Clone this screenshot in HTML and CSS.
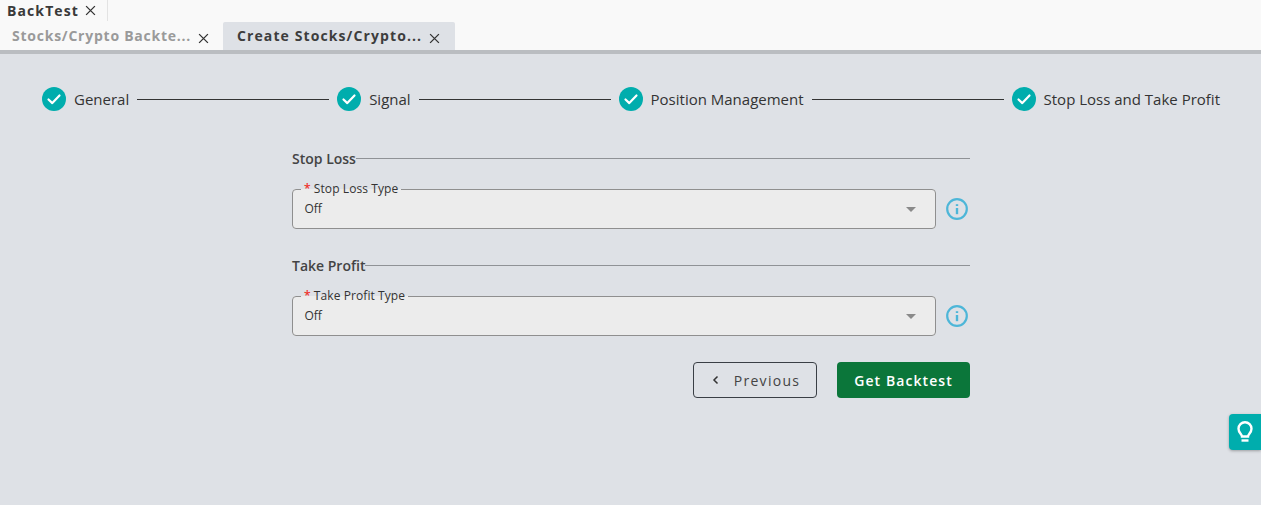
FILE: index.html
```html
<!DOCTYPE html>
<html lang="en">
<head>
<meta charset="utf-8">
<title>BackTest</title>
<link rel="stylesheet" href="styles.css">
</head>
<body>
<header class="tabs">
  <div class="tab-row-top">
    <div class="top-tab"><span>BackTest</span>
      <svg class="close" viewBox="0 0 10 10"><path d="M1 1l8 8M9 1l-8 8"/></svg></div>
  </div>
  <div class="tab-row-sub">
    <div class="sub-tab"><span class="sub-label">Stocks/Crypto Backte...</span>
      <svg class="close" viewBox="0 0 10 10"><path d="M1 1l8 8M9 1l-8 8"/></svg></div>
    <div class="sub-tab active"><span class="sub-label">Create Stocks/Crypto...</span>
      <svg class="close" viewBox="0 0 10 10"><path d="M1 1l8 8M9 1l-8 8"/></svg></div>
  </div>
</header>
<main class="main">
  <ol class="stepper">
    <li class="step"><svg class="check" viewBox="0 0 24 24"><circle cx="12" cy="12" r="12"/><path d="M6.5 12.5l3.8 3.6 7.2-7.6"/></svg><span>General</span></li>
    <li class="bar"></li>
    <li class="step"><svg class="check" viewBox="0 0 24 24"><circle cx="12" cy="12" r="12"/><path d="M6.5 12.5l3.8 3.6 7.2-7.6"/></svg><span>Signal</span></li>
    <li class="bar"></li>
    <li class="step"><svg class="check" viewBox="0 0 24 24"><circle cx="12" cy="12" r="12"/><path d="M6.5 12.5l3.8 3.6 7.2-7.6"/></svg><span>Position Management</span></li>
    <li class="bar"></li>
    <li class="step"><svg class="check" viewBox="0 0 24 24"><circle cx="12" cy="12" r="12"/><path d="M6.5 12.5l3.8 3.6 7.2-7.6"/></svg><span>Stop Loss and Take Profit</span></li>
  </ol>
  <form class="form">
    <div class="divider"><span>Stop Loss</span></div>
    <div class="field-row">
      <fieldset class="select">
        <legend><b>*</b> Stop Loss Type</legend>
        <span class="value">Off</span>
        <i class="caret"></i>
      </fieldset>
      <svg class="info" viewBox="0 0 22 22"><circle cx="11" cy="11" r="9.8"/><path d="M11 10v6.200"/><path d="M11 6.200v1.800"/></svg>
    </div>
    <div class="divider second"><span>Take Profit</span></div>
    <div class="field-row">
      <fieldset class="select">
        <legend><b>*</b> Take Profit Type</legend>
        <span class="value">Off</span>
        <i class="caret"></i>
      </fieldset>
      <svg class="info" viewBox="0 0 22 22"><circle cx="11" cy="11" r="9.8"/><path d="M11 10v6.200"/><path d="M11 6.200v1.800"/></svg>
    </div>
    <div class="actions">
      <button type="button" class="btn ghost"><svg class="chev" viewBox="0 0 8 10"><path d="M5.500 1.500L2 5l3.500 3.500"/></svg>Previous</button>
      <button type="button" class="btn primary">Get Backtest</button>
    </div>
  </form>
  <button type="button" class="tip" aria-label="Tips">
    <svg viewBox="0 0 20 24"><path d="M7 16.500c0-2.300-3.500-3.800-3.500-7.800a6.500 6.500 0 0 1 13 0c0 4-3.500 5.500-3.500 7.800z"/><path d="M6.500 20.500h7"/></svg>
  </button>
</main>
</body>
</html>
```
FILE: styles.css
```css
* { box-sizing: border-box; }
html, body { margin: 0; height: 100%; }
body {
  font-family: "Open Sans", sans-serif;
  color: #333;
  background: #dee1e6;
  overflow: hidden;
  display: flex;
  flex-direction: column;
}
.tabs {
  background: #f9f9f9;
  border-bottom: 4px solid #babdc1;
  height: 54px;
  flex: none;
}
.tab-row-top { height: 21px; display: flex; }
.top-tab {
  width: 108px;
  height: 21px;
  padding-left: 7px;
  display: flex;
  align-items: center;
  gap: 6px;
  border-right: 1px solid #e3e3e3;
  font-size: 14px;
  font-weight: 700;
  letter-spacing: 1.1px;
  color: #3a3a3a;
}
.close { width: 11px; height: 11px; flex: none; }
.close path { stroke: #333; stroke-width: 1.2; fill: none; }
.tab-row-sub { display: flex; height: 29px; align-items: flex-end; }
.sub-tab {
  height: 28px;
  display: flex;
  align-items: center;
  padding-bottom: 2px;
  font-size: 14px;
  font-weight: 700;
  letter-spacing: 0.76px;
  color: #9a9a9a;
  width: 223px;
  padding-left: 12px;
}
.sub-tab .close { margin-left: 7px; margin-top: 7px; }
.sub-tab.active {
  width: 232px;
  padding-left: 14px;
  background: #dee1e6;
  color: #3d3d3d;
  letter-spacing: 1.1px;
  border-radius: 2px 2px 0 0;
}
.sub-label { white-space: nowrap; }
.main { flex: 1; position: relative; }
.stepper {
  list-style: none;
  margin: 0;
  padding: 33px 41px 0 42px;
  display: flex;
  align-items: center;
  height: 57px;
}
.step {
  display: flex;
  align-items: center;
  gap: 8px;
  font-size: 15px;
  color: #333;
  white-space: nowrap;
}
.check { width: 24px; height: 24px; flex: none; }
.check circle { fill: #00adad; }
.check path { fill: none; stroke: #fff; stroke-width: 2.2; stroke-linecap: round; stroke-linejoin: round; }
.bar { flex: 1; height: 1px; background: #333; margin: 0 8px; }
.form { width: 678px; margin: 37px 0 0 292px; }
.divider {
  display: flex;
  align-items: center;
  height: 20px;
  font-size: 14px;
  font-weight: 600;
  color: #444;
}
.divider::after { content: ""; flex: 1; height: 1px; background: #8f9296; }
.divider.second { margin-top: 26px; }
.field-row {
  display: flex;
  align-items: center;
  gap: 10px;
  margin-top: 14px;
}
.select {
  position: relative;
  flex: none;
  width: 644px;
  height: 47px;
  margin: 0;
  padding: 0 12px;
  background: #ececec;
  border: 1px solid #8f8f8f;
  border-radius: 4px;
}
.select legend {
  padding: 0 3px;
  margin-left: -4px;
  font-size: 12px;
  line-height: 14px;
  letter-spacing: 0.08px;
  color: #333;
}
.select legend b { color: #f0302a; font-weight: 600; }
.value { display: block; margin-top: 5px; margin-left: -0.5px; font-size: 12px; line-height: 16px; color: #333; }
.caret {
  position: absolute;
  right: 19px;
  top: 11px;
  width: 0;
  height: 0;
  border-left: 5.5px solid transparent;
  border-right: 5.5px solid transparent;
  border-top: 5.5px solid #8a8a8a;
}
.info { width: 22px; height: 22px; flex: none; margin-top: 7px; margin-left: 0; }
.info circle { fill: none; stroke: #4db6d8; stroke-width: 2.2; }
.info path { fill: none; stroke: #4db6d8; stroke-width: 2.4; }
.actions { display: flex; justify-content: flex-end; gap: 20px; margin-top: 26px; }
.btn {
  height: 36px;
  border-radius: 4px;
  font-family: inherit;
  font-size: 14px;
  letter-spacing: 1.08px;
  display: flex;
  align-items: center;
  justify-content: center;
  padding: 0;
}
.ghost {
  width: 124px;
  background: transparent;
  border: 1px solid #3a3f45;
  color: #444;
  font-weight: 500;
  letter-spacing: 1.3px;
  gap: 14px;
  padding-left: 2px;
}
.chev { width: 8px; height: 10px; }
.chev path { fill: none; stroke: #333; stroke-width: 1.5; }
.primary { width: 133px; background: #0b763a; border: 0; color: #fff; font-weight: 600; }
.tip {
  position: absolute;
  right: 0;
  top: 360px;
  width: 32px;
  height: 36px;
  padding: 0;
  border: 0;
  border-radius: 4px 0 0 4px;
  background: #00adad;
  box-shadow: 0 1px 3px rgba(0,0,0,.3);
  display: flex;
  align-items: center;
  justify-content: center;
}
.tip svg { width: 20px; height: 24px; }
.tip path { fill: none; stroke: #fff; stroke-width: 2.4; }
```
